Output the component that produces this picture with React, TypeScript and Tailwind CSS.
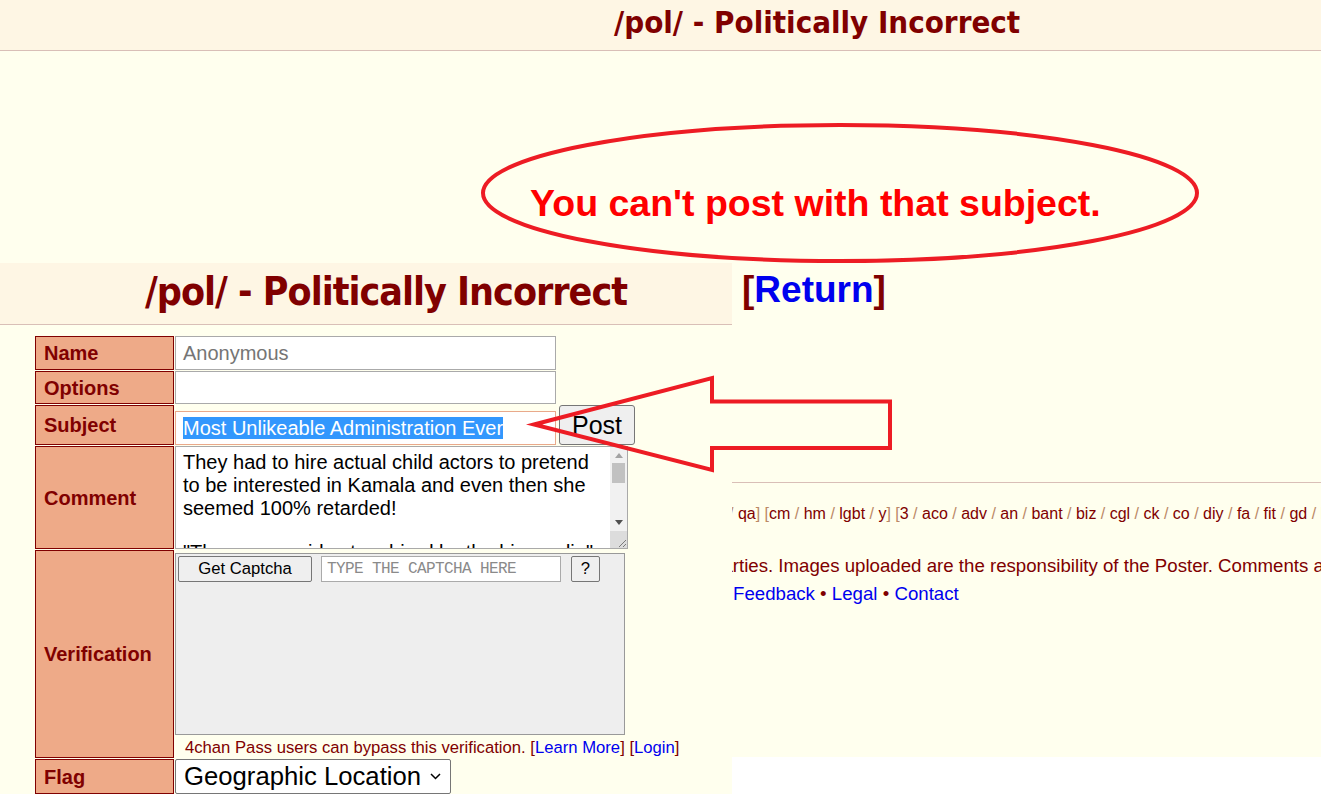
import React from "react";

const titleFont =
  "font-['DejaVu_Sans_Condensed','DejaVu_Sans',sans-serif] font-stretch-condensed font-bold text-[#800000] whitespace-nowrap";

const Label = ({ children }: { children: React.ReactNode }) => (
  <div className="flex items-center border border-[#800000] bg-[#eeaa88] pl-[8px] text-[20px] font-bold text-[#800000]">
    {children}
  </div>
);

const Sep = ({ children }: { children: React.ReactNode }) => (
  <span className="text-[#bb8866]">{children}</span>
);

const BoardGroup = ({ boards }: { boards: string[] }) => (
  <>
    {boards.map((b, i) => (
      <React.Fragment key={b}>
        {i > 0 && <Sep> / </Sep>}
        <a className="text-[#800000]">{b}</a>
      </React.Fragment>
    ))}
  </>
);

const Caret = ({ up }: { up?: boolean }) => (
  <svg width="8" height="5" viewBox="0 0 8 5">
    {up ? (
      <path d="M0 5 L4 0 L8 5 Z" fill="#a3a3a3" />
    ) : (
      <path d="M0 0 L8 0 L4 5 Z" fill="#505050" />
    )}
  </svg>
);

const PostForm = () => (
  <div className="absolute left-0 top-[263px] h-[531px] w-[732px] bg-[#ffffee]">
    <div className="h-[62px] border-b border-[#d9bfb7] bg-[#fef6e4] pl-[145px] pt-[9px]">
      <div className={`${titleFont} text-[39px] leading-[39px] tracking-[-1px]`}>
        /pol/ - Politically Incorrect
      </div>
    </div>

    <div className="ml-[35px] mt-[11px] grid grid-cols-[139px_1fr] grid-rows-[34px_33px_40px_103px_208px_35px] gap-px">
      <Label>Name</Label>
      <div className="flex h-[34px] w-[381px] items-center border border-[#aaaaaa] bg-white pl-[7px] text-[20px] text-[#757575]">
        Anonymous
      </div>

      <Label>Options</Label>
      <div className="h-[33px] w-[381px] border border-[#aaaaaa] bg-white" />

      <Label>Subject</Label>
      <div className="flex items-end gap-[3px]">
        <div className="flex h-[34px] w-[381px] items-center border border-[#e9a98b] bg-white pl-[7px]">
          <span className="whitespace-nowrap bg-[#3297fd] text-[20px] leading-[22px] text-white">
            Most Unlikeable Administration Ever
          </span>
        </div>
        <button className="h-[40px] w-[76px] rounded-[3px] border border-[#767676] bg-[#efefef] text-[25px] leading-none text-black">
          Post
        </button>
      </div>

      <Label>Comment</Label>
      <div className="flex h-[103px] w-[453px] border border-[#a9a9a9] bg-white">
        <div className="flex-1 overflow-hidden whitespace-nowrap pl-[7px] pt-[4px] text-[20px] leading-[23px] text-black">
          <div>They had to hire actual child actors to pretend</div>
          <div>to be interested in Kamala and even then she</div>
          <div>seemed 100% retarded!</div>
          <div className="h-[21px]" />
          <div>"These are paid actors hired by the big media"</div>
        </div>
        <div className="flex w-[17px] flex-col bg-[#f1f1f1]">
          <div className="flex h-[16px] items-center justify-center">
            <Caret up />
          </div>
          <div className="mx-[2px] h-[20px] bg-[#c1c1c1]" />
          <div className="flex-1" />
          <div className="flex h-[17px] items-center justify-center">
            <Caret />
          </div>
          <div className="flex h-[17px] items-end justify-end bg-[#dcdcdc]">
            <svg width="9" height="9" viewBox="0 0 9 9">
              <path d="M1 8 L8 1 M5 8 L8 5" stroke="#7a7a7a" strokeWidth="1" />
            </svg>
          </div>
        </div>
      </div>

      <Label>Verification</Label>
      <div className="flex flex-col">
        <div className="mt-[3px] flex h-[182px] w-[450px] items-start border border-[#999999] bg-[#eeeeee] pl-[2px] pt-[2px]">
          <button className="h-[26px] w-[134px] rounded-[2px] border border-[#767676] bg-[#efefef] text-[16.67px] leading-none text-black">
            Get Captcha
          </button>
          <div className="ml-[9px] flex h-[26px] w-[240px] items-center whitespace-nowrap border border-[#aaaaaa] bg-white pl-[5px] font-['Liberation_Mono',monospace] text-[16px] tracking-[-0.6px] text-[#8a8a8a]">
            TYPE THE CAPTCHA HERE
          </div>
          <button className="ml-[10px] h-[26px] w-[29px] rounded-[2px] border border-[#767676] bg-[#efefef] text-[16.67px] leading-none text-black">
            ?
          </button>
        </div>
        <div className="mt-[3px] whitespace-nowrap pl-[10px] text-[16.67px] leading-[20px] text-[#800000]">
          4chan Pass users can bypass this verification. [
          <a className="text-[#0000ee]">Learn More</a>] [
          <a className="text-[#0000ee]">Login</a>]
        </div>
      </div>

      <Label>Flag</Label>
      <div className="flex h-[35px] w-[276px] items-center rounded-[2px] border border-[#767676] bg-white pl-[8px] text-[25.7px] text-black">
        Geographic Location
        <svg className="ml-[9px]" width="11" height="7" viewBox="0 0 11 7">
          <path d="M1 1 L5.5 5.5 L10 1" fill="none" stroke="#000" strokeWidth="1.5" />
        </svg>
      </div>
    </div>
  </div>
);

const Annotations = () => (
  <svg
    className="pointer-events-none absolute left-0 top-0"
    width="1321"
    height="801"
    viewBox="0 0 1321 801"
  >
    <ellipse cx="840" cy="193" rx="357" ry="68" fill="none" stroke="#ed1c24" strokeWidth="4" />
    <polygon
      points="534,424.5 712,378 712,401.5 890,401.5 890,448 712,448 712,470"
      fill="none"
      stroke="#ed1c24"
      strokeWidth="4"
    />
  </svg>
);

export default function App() {
  return (
    <div className="relative h-[801px] w-[1321px] overflow-hidden bg-white font-['Liberation_Sans',Arial,sans-serif]">
      <div className="flex h-[757px] flex-col bg-[#ffffee]">
        <div className="h-[51px] shrink-0 border-b border-[#d9bfb7] bg-[#fef6e4] pl-[614px] pt-[7px]">
          <div className={`${titleFont} text-[31px] leading-[31px] tracking-[0px]`}>
            /pol/ - Politically Incorrect
          </div>
        </div>

        <div className="mt-[134px] whitespace-nowrap pl-[530px] text-[37.5px] font-bold leading-[37px] text-[#ff0000]">
          You can't post with that subject.
        </div>

        <div className="mt-[50px] pl-[742px] text-[37px] font-bold leading-[36px] text-[#800000]">
          [<a className="text-[#0000ee]">Return</a>]
        </div>

        <hr className="mt-[174px] border-[#d9bfb7]" />

        <div className="mt-[23px] whitespace-nowrap pl-[729px] text-[16px] leading-[16px]">
          <Sep>/ </Sep>
          <BoardGroup boards={["qa"]} />
          <Sep>] [</Sep>
          <BoardGroup boards={["cm", "hm", "lgbt", "y"]} />
          <Sep>] [</Sep>
          <BoardGroup
            boards={["3", "aco", "adv", "an", "bant", "biz", "cgl", "ck", "co", "diy", "fa", "fit", "gd", "hc", "his", "int"]}
          />
        </div>

        <div className="mt-[30px] whitespace-nowrap pl-[712px] text-[18.67px] leading-[28px] text-[#800000]">
          parties. Images uploaded are the responsibility of the Poster. Comments are owned by the Poster.
        </div>
        <div className="whitespace-nowrap pl-[733px] text-[18.67px] leading-[28px] text-[#800000]">
          <a className="text-[#0000ee]">Feedback</a> • <a className="text-[#0000ee]">Legal</a> •{" "}
          <a className="text-[#0000ee]">Contact</a>
        </div>
      </div>

      <PostForm />
      <Annotations />
    </div>
  );
}
